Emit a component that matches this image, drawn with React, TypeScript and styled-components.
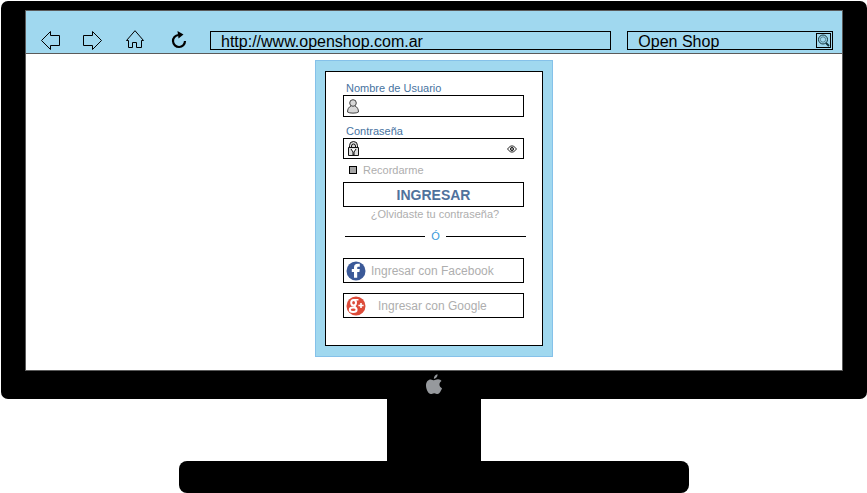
import React from 'react';
import styled, { createGlobalStyle } from 'styled-components';

const GlobalStyle = createGlobalStyle`
  *, *::before, *::after { box-sizing: border-box; }
  body { margin: 0; background: #fff; font-family: "Liberation Sans", Arial, sans-serif; }
  button, input { font: inherit; }
  svg { display: block; flex: none; }
`;

const Computer = styled.main`
  display: flex;
  flex-direction: column;
  align-items: center;
  padding: 1px 0 0 1px;
`;

const Monitor = styled.div`
  width: 100%;
  padding: 9px 24px 0;
  background: #000;
  border-radius: 7px;
`;

const Screen = styled.div`
  border: 1px solid #5a5a5a;
  background: #fff;
`;

const Chin = styled.div`
  display: flex;
  justify-content: center;
  height: 28px;
  padding-top: 3px;
`;

const Neck = styled.div`
  width: 94px;
  height: 62px;
  background: #000;
`;

const Base = styled.div`
  width: 59%;
  height: 32px;
  border-radius: 8px;
  background: #000;
`;

const Toolbar = styled.header`
  display: flex;
  align-items: flex-end;
  height: 43px;
  padding: 0 9px 3px 13px;
  background: #a0d8ef;
  border-bottom: 1px solid #5a5a5a;
`;

const NavGroup = styled.nav`
  display: flex;
  gap: 18px;
  margin-right: 21px;
`;

const IconButton = styled.button`
  display: flex;
  align-items: center;
  justify-content: center;
  width: 24px;
  height: 20px;
  padding: 0;
  border: 0;
  background: none;
  color: #000;
`;

const AddressBox = styled.div<{ $grow: number }>`
  display: flex;
  align-items: center;
  flex: ${({ $grow }) => $grow} 1 0;
  min-width: 0;
  height: 19px;
  border: 1px solid #000;
  & + & { margin-left: 16px; }
`;

const AddressInput = styled.input`
  flex: 1;
  min-width: 0;
  height: 17px;
  padding: 2px 0 0 10px;
  border: 0;
  outline: 0;
  background: none;
  color: #000;
  font-size: 16px;
`;

const SearchButton = styled(IconButton)`
  width: 15px;
  height: 15px;
  margin-right: 1px;
  border: 1px solid #000;
`;

const Page = styled.section`
  display: flex;
  justify-content: center;
  padding: 6px 0 13px;
`;

const Frame = styled.div`
  padding: 10px 9px;
  background: #a0d8ef;
  border: 1px solid #85c1e9;
`;

const Card = styled.form`
  display: flex;
  flex-direction: column;
  width: 218px;
  padding: 10px 18px 27px 17px;
  border: 1px solid #000;
  background: #fff;
`;

const Label = styled.label`
  padding-left: 3px;
  color: #47739f;
  font-size: 11px;
  line-height: 13px;
`;

const Field = styled.div`
  display: flex;
  align-items: center;
  height: 22px;
  margin-bottom: 8px;
  padding: 0 4px 0 3px;
  border: 1px solid #000;
`;

const PasswordField = styled(Field)`
  height: 21px;
  margin-bottom: 4px;
`;

const FieldInput = styled.input`
  flex: 1;
  min-width: 0;
  height: 18px;
  border: 0;
  outline: 0;
  background: none;
  font-size: 11px;
`;

const EyeButton = styled(IconButton)`
  width: 14px;
  height: 12px;
`;

const Remember = styled.label`
  display: flex;
  align-items: center;
  gap: 6px;
  padding-left: 6px;
  margin-bottom: 5px;
  color: #aeaeae;
  font-size: 11px;
  line-height: 14px;
`;

const Check = styled.input`
  appearance: none;
  width: 8px;
  height: 8px;
  margin: 0;
  border: 1px solid #000;
  background: #a6a6a6;
  &:checked { background: #47739f; }
`;

const Submit = styled.button`
  height: 25px;
  padding: 0;
  border: 1px solid #000;
  background: #fff;
  color: #50729c;
  font-size: 14px;
  font-weight: 700;
`;

const Forgot = styled.a`
  align-self: center;
  padding-left: 3px;
  color: #aeaeae;
  font-size: 11px;
  line-height: 14px;
  text-decoration: none;
`;

const Divider = styled.div`
  display: flex;
  align-items: center;
  justify-content: center;
  gap: 6px;
  margin: 8px -2px 15px 2px;
  color: #3498db;
  font-size: 11px;
  line-height: 14px;
  &::before, &::after {
    content: "";
    flex: 1;
    height: 1px;
    background: #000;
  }
`;

const SocialButton = styled.button<{ $gap: number }>`
  display: flex;
  align-items: center;
  gap: ${({ $gap }) => $gap}px;
  height: 25px;
  padding: 0 2px;
  border: 1px solid #000;
  background: #fff;
  color: #aeaeae;
  font-size: 12px;
  white-space: nowrap;
  & + & { margin-top: 10px; }
`;

const line = { fill: 'none', stroke: 'currentColor', strokeWidth: 1 };

const Arrow = ({ right = false }: { right?: boolean }) => (
  <svg width="20" height="20" viewBox="0 0 20 20" {...line}>
    <path d={right ? 'M.5 5.5h9v-4l9 9-9 9v-4h-9z' : 'M18.5 5.5h-9v-4l-9 9 9 9v-4h9z'} />
  </svg>
);

const Home = () => (
  <svg width="18" height="20" viewBox="0 0 18 20" {...line}>
    <path d="M9 .7L.5 10.5h2v7h4v-5h4v5h5v-7h2z" />
  </svg>
);

const Reload = () => (
  <svg width="20" height="20" viewBox="0 0 20 20">
    <path d="M11.5 5A6 6 0 1 0 18 11" fill="none" stroke="#000" strokeWidth="2.2" />
    <path d="M10.5 1l6 3.5-5 4z" fill="#000" />
  </svg>
);

const Magnifier = () => (
  <svg width="13" height="13" viewBox="0 0 13 13" fill="none" stroke="#12343c">
    <circle cx="6" cy="5.5" r="4.5" />
    <circle cx="6" cy="5.5" r="2.7" strokeWidth=".5" />
    <path d="M9 9l3 3" strokeWidth="1.8" />
  </svg>
);

const User = () => (
  <svg width="12" height="15" viewBox="0 0 12 15" fill="#d8d8d8" stroke="#444">
    <path d="M4 7C1.8 8 .5 10 .5 13c2 1.5 9 1.5 11 0 0-3-1.3-5-3.5-6" />
    <circle cx="6" cy="4" r="3.3" />
  </svg>
);

const Lock = () => (
  <svg width="13" height="16" viewBox="0 0 13 16" fill="#ddd" stroke="#111">
    <path d="M2.5 7V4.5a4 4 0 0 1 8 0V7M4.5 7V5a2 2 0 0 1 4 0v2" />
    <path d="M1.5 6.5h10v8h-10z" />
    <path d="M4 8l2 3v3h1v-3l2-3" fill="#fff" />
  </svg>
);

const Eye = () => (
  <svg width="10" height="8" viewBox="0 0 10 8" fill="none" stroke="#222">
    <path d="M.5 4L3.5 1h3l3 3-3 3h-3z" />
    <circle cx="5" cy="4" r="1.6" fill="#999" />
  </svg>
);

const Facebook = () => (
  <svg width="20" height="20" viewBox="0 0 20 20">
    <circle cx="10" cy="10" r="9.5" fill="#3b5998" />
    <path d="M8 16.8V11H5.8V8H8V6.4c0-2.4 1.4-3.6 3.6-3.6h2.2v3h-1.4c-.9 0-1.2.4-1.2 1.1V8h2.6l-.4 3h-2.2v5.8z" fill="#fff" />
  </svg>
);

const GooglePlus = () => (
  <svg width="20" height="20" viewBox="0 0 20 20">
    <circle cx="10" cy="10" r="9.5" fill="#dd4b39" />
    <g fill="none" stroke="#fff">
      <ellipse cx="7.6" cy="6.7" rx="2.4" ry="2.7" strokeWidth="2" />
      <ellipse cx="7.2" cy="13.7" rx="3.4" ry="2.2" strokeWidth="2" />
      <path d="M8 3.7h4.5M8 9.5l2 2.5" strokeWidth="1.6" />
      <path d="M15 6.9v5.2M12.4 9.5h5.2" strokeWidth="1.6" />
    </g>
  </svg>
);

const Apple = () => (
  <svg width="16" height="22" viewBox="0 0 16 22" fill="#96999d">
    <path d="M8 6.2C9.2 6.2 10 5.3 12 5.3c1.5 0 2.8.8 3.5 1.8-3 1.8-2.6 6 .5 7.2-.8 2.3-2.5 5.7-4.4 5.7-1.3 0-1.8-.8-3.4-.8s-2.2.8-3.4.8C2.5 20 0 15.6 0 11.5 0 7.6 2.3 5.4 4.6 5.4c1.5 0 2.5.8 3.4.8z" />
    <path d="M7.8 4.8C7.7 2.6 9.5.6 11.5.3c.3 2.3-1.6 4.5-3.7 4.5z" />
  </svg>
);

export default function App() {
  return (
    <>
      <GlobalStyle />
      <Computer>
        <Monitor>
          <Screen>
            <Toolbar>
              <NavGroup>
                <IconButton aria-label="Atrás"><Arrow /></IconButton>
                <IconButton aria-label="Adelante"><Arrow right /></IconButton>
                <IconButton aria-label="Inicio"><Home /></IconButton>
                <IconButton aria-label="Recargar"><Reload /></IconButton>
              </NavGroup>
              <AddressBox $grow={402}>
                <AddressInput aria-label="Dirección" defaultValue="http://www.openshop.com.ar" />
              </AddressBox>
              <AddressBox $grow={205}>
                <AddressInput aria-label="Buscar" defaultValue="Open Shop" />
                <SearchButton aria-label="Buscar"><Magnifier /></SearchButton>
              </AddressBox>
            </Toolbar>
            <Page>
              <Frame>
                <Card onSubmit={(e) => e.preventDefault()}>
                  <Label htmlFor="user">Nombre de Usuario</Label>
                  <Field>
                    <User />
                    <FieldInput id="user" type="text" />
                  </Field>
                  <Label htmlFor="password">Contraseña</Label>
                  <PasswordField>
                    <Lock />
                    <FieldInput id="password" type="password" />
                    <EyeButton type="button" aria-label="Mostrar contraseña"><Eye /></EyeButton>
                  </PasswordField>
                  <Remember>
                    <Check type="checkbox" />
                    Recordarme
                  </Remember>
                  <Submit type="submit">INGRESAR</Submit>
                  <Forgot href="#recuperar">¿Olvidaste tu contraseña?</Forgot>
                  <Divider>Ó</Divider>
                  <SocialButton type="button" $gap={5}><Facebook />Ingresar con Facebook</SocialButton>
                  <SocialButton type="button" $gap={12}><GooglePlus />Ingresar con Google</SocialButton>
                </Card>
              </Frame>
            </Page>
          </Screen>
          <Chin><Apple /></Chin>
        </Monitor>
        <Neck />
        <Base />
      </Computer>
    </>
  );
}
